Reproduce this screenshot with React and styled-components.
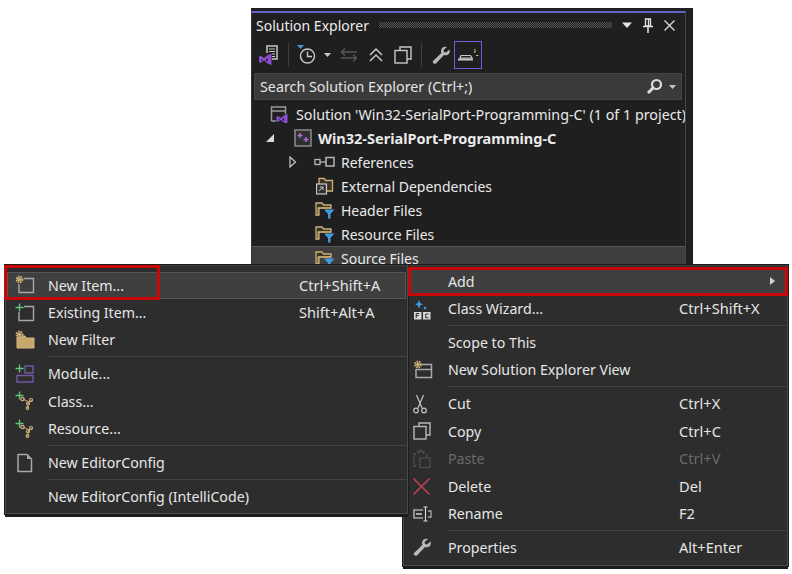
import React from "react";
import styled, { createGlobalStyle } from "styled-components";

const Global = createGlobalStyle`
  html, body { margin: 0; padding: 0; background: #fff; }
  body { font-family: "Noto Sans", "Open Sans", sans-serif; }
`;

const Stage = styled.div`
  position: relative;
  width: 792px;
  height: 574px;
  overflow: hidden;
`;

const Explorer = styled.section`
  position: absolute;
  left: 251px;
  top: 8px;
  width: 442px;
  height: 258px;
  box-sizing: border-box;
  background: #1f1f1f;
  padding: 3px 7px 0 0;
  display: flex;
  flex-direction: column;
  overflow: hidden;
`;

const ExplorerInner = styled.div`
  border-top: 2px solid #6063c8;
  border-right: 1px solid #454545;
  border-left: 1px solid #333;
  flex: 1;
  display: flex;
  flex-direction: column;
  min-height: 0;
  & > * {
    flex: none;
  }
`;

const TitleBar = styled.header`
  height: 26px;
  display: flex;
  align-items: center;
  padding: 0 10px 2px 4px;
  box-sizing: border-box;
  color: #ececec;
  font-size: 14px;
`;

const Grip = styled.div`
  flex: 1;
  height: 6px;
  margin: 0 10px 0 10px;
  background-image:
    linear-gradient(45deg, #565656 25%, transparent 25%, transparent 75%, #565656 75%),
    linear-gradient(45deg, #565656 25%, transparent 25%, transparent 75%, #565656 75%);
  background-size: 2px 2px;
  background-position: 0 0, 1px 1px;
`;

const TitleButtons = styled.div`
  display: flex;
  align-items: center;
`;

const TitleGap = styled.span`
  width: ${(p) => p.$w}px;
`;

const Toolbar = styled.div`
  height: 32px;
  display: flex;
  align-items: center;
  padding-left: 4px;
`;

const ToolButton = styled.div`
  width: ${(p) => p.$w || 30}px;
  height: 28px;
  display: flex;
  align-items: center;
  justify-content: center;
  box-sizing: border-box;
  border: ${(p) => (p.$active ? "1px solid #6a63e0" : "none")};
`;

const ToolSep = styled.div`
  width: 1px;
  height: 24px;
  background: #3f3f3f;
  margin: 0 6px;
`;

const SearchBox = styled.div`
  height: 27px;
  margin: 2px 3px 2px 2px;
  background: #3a3a3a;
  border: 1px solid #444;
  box-sizing: border-box;
  display: flex;
  align-items: center;
  padding: 0 4px 0 5px;
  color: #e4e4e4;
  font-size: 14.3px;
`;

const SearchLabel = styled.span`
  flex: 1;
`;

const SearchGap = styled.span`
  width: 6px;
`;

const Tree = styled.div`
  display: flex;
  flex-direction: column;
`;

const TreeRow = styled.div`
  height: 24px;
  flex: none;
  display: flex;
  align-items: center;
  box-sizing: border-box;
  padding-left: ${(p) => p.$indent}px;
  color: #eaeaea;
  font-size: ${(p) => p.$size || 14}px;
  font-weight: ${(p) => (p.$bold ? 700 : 400)};
  white-space: nowrap;
  background: ${(p) => (p.$selected ? "#3e3e3e" : "transparent")};
  border-top: ${(p) => (p.$selected ? "1px solid #585858" : "none")};
  overflow: hidden;
`;

const Twist = styled.span`
  width: ${(p) => p.$w}px;
  display: flex;
  align-items: center;
  justify-content: flex-start;
  flex: none;
`;

const TreeIcon = styled.span`
  width: ${(p) => p.$w}px;
  display: flex;
  align-items: center;
  flex: none;
`;

const Menu = styled.nav`
  position: absolute;
  left: ${(p) => p.$x}px;
  top: ${(p) => p.$y}px;
  width: ${(p) => p.$width}px;
  z-index: ${(p) => p.$z};
  box-sizing: border-box;
  background: #2d2d2d;
  border: 1px solid #4a4a4a;
  border-top-color: #3a3a3a;
  padding: ${(p) => p.$pad}px 1px ${(p) => p.$padBottom}px 1px;
  box-shadow: 0 0 0 1px #1c1c1c, 0 3px 0 0 #1c1c1c;
`;

const Row = styled.div`
  height: 27.4px;
  box-sizing: border-box;
  display: grid;
  grid-template-columns: ${(p) => p.$cols};
  align-items: center;
  color: ${(p) => (p.$off ? "#6a6a6a" : "#e6e6e6")};
  font-size: 14.2px;
  white-space: nowrap;
  background: ${(p) => (p.$hot ? "#3f3f3f" : "transparent")};
  border: ${(p) => (p.$hot ? "1px solid #555" : "1px solid transparent")};
`;

const Shortcut = styled.span`
  font-size: 14.6px;
  margin-top: -1px;
`;

const IconCell = styled.span`
  display: flex;
  align-items: center;
  justify-content: flex-start;
  padding-left: ${(p) => p.$pad}px;
`;

const Chevron = styled.span`
  justify-self: end;
  margin-right: 10px;
  width: 0;
  height: 0;
  border-left: 5px solid #d0d0d0;
  border-top: 4px solid transparent;
  border-bottom: 4px solid transparent;
`;

const Sep = styled.div`
  height: 6.6px;
  display: flex;
  align-items: center;
  padding-left: ${(p) => p.$left}px;
  &::after {
    content: "";
    flex: 1;
    height: 1px;
    background: #444;
  }
`;

const Callout = styled.div`
  position: absolute;
  left: ${(p) => p.$x}px;
  top: ${(p) => p.$y}px;
  width: ${(p) => p.$w}px;
  height: ${(p) => p.$h}px;
  border: 3px solid #c80808;
  box-sizing: border-box;
  z-index: 5;
`;

const Svg = ({ w = 20, h = 20, children }) => (
  <svg width={w} height={h} viewBox={`0 0 ${w} ${h}`} fill="none">{children}</svg>
);

const G = "#c8c8c8";
const Y = "#cdb078";
const B = "#3f9be0";
const P = "#7657a8";
const VS = "#8a4fd0";

const VsMark = ({ x, y, s = 1 }) => (
  <path transform={`translate(${x} ${y}) scale(${s})`} d="M1 2l3 2 3-2.500 3-1v9l-3-1-3-2.500-3 2-1-1V3zM2 4.500v2L3 5.500zM7 4l-2 1.500L7 7z" fill={VS} fillRule="evenodd" />
);

const SolutionVsIcon = () => (
  <Svg w={20} h={22}>
    <path d="M8 2h10v13H8z" stroke={G} strokeWidth="1.500" />
    <path d="M10 5h6M10 7.500h6M10 10h6M10 12.500h6" stroke={G} />
    <rect x="0" y="9" width="13" height="13" fill="#1f1f1f" />
    <VsMark x={0} y={9} s={1.25} />
  </Svg>
);
const HistoryIcon = () => (
  <Svg w={20} h={22}>
    <path d="M0 1h7L3.500 5z" fill={B} />
    <circle cx="10.500" cy="12" r="7" stroke={G} strokeWidth="1.400" />
    <path d="M10.500 7.500V12.500H15" stroke={G} strokeWidth="1.400" />
  </Svg>
);
const SmallDown = ({ c = G }) => (
  <Svg w={8} h={6}><path d="M0 1h7L3.500 5z" fill={c} /></Svg>
);
const TitleDown = () => (
  <Svg w={10} h={7}><path d="M0 .5h10L5 6z" fill="#e4e4e4" /></Svg>
);
const SyncIcon = () => (
  <Svg w={20} h={16}>
    <path d="M18 5H3M6 1.500L2.500 5 6 8.500M2 11h15M14 7.500l3.500 3.500-3.500 3.500" stroke="#565656" strokeWidth="1.300" />
  </Svg>
);
const CollapseIcon = () => (
  <Svg w={16} h={16}>
    <path d="M2 8l6-6 6 6M2 14l6-6 6 6" stroke={G} strokeWidth="1.500" />
  </Svg>
);
const CopyViewsIcon = ({ c = G }) => (
  <Svg w={18} h={18}>
    <path d="M6 4V1h11v12h-4" stroke={c} strokeWidth="1.400" />
    <rect x="1" y="4.500" width="12" height="12.500" stroke={c} strokeWidth="1.400" />
  </Svg>
);
const WrenchIcon = () => (
  <Svg w={19} h={19}>
    <path d="M17.500 3.500L14 6.500l-2-.5-.5-2L15 1c-2.500-1-6 .2-6 4 0 1 .2 1.500.4 2L1 15c-1 2 1.500 3.500 3 2.500l8-8.500c3 1 7-1 5.500-5.500z" fill="#b8b8b8" />
  </Svg>
);
const PreviewIcon = () => (
  <Svg w={21} h={16}>
    <path d="M3 8.500h9.500l1.500 2.500H2z" stroke={G} strokeWidth="1.200" />
    <path d="M0 12.500h15" stroke={G} strokeWidth="2" />
    <path d="M16 5.500l1.500-1.500M18 8.500h2.500M16.500 2l1 1.500" stroke={Y} strokeWidth="1.200" />
  </Svg>
);
const PinIcon = () => (
  <Svg w={12} h={15}>
    <path d="M3.500 1h5v7h-5zM6.500 1.500V8" stroke="#e4e4e4" strokeWidth="1.300" />
    <path d="M1 8.500h10M6 9v6" stroke="#e4e4e4" strokeWidth="1.500" />
  </Svg>
);
const CloseIcon = ({ c = "#d8d8d8", s = 11, sw = 1.400 }) => (
  <Svg w={s} h={s}><path d={`M.5.5L${s - 0.5} ${s - 0.5}M${s - 0.5} .5L.5 ${s - 0.5}`} stroke={c} strokeWidth={sw} /></Svg>
);
const SearchIcon = () => (
  <Svg w={17} h={17}>
    <circle cx="10.500" cy="6.500" r="4.500" stroke="#dcdcdc" strokeWidth="2.200" />
    <path d="M7 10l-5 5" stroke="#dcdcdc" strokeWidth="3" />
  </Svg>
);
const SolutionIcon = () => (
  <Svg w={19} h={18}>
    <path d="M1.500 16V2h14v7M1.500 6h14M1.500 16H6" stroke="#9a9a9a" strokeWidth="1.500" />
    <VsMark x={6.500} y={8.500} s={1.100} />
  </Svg>
);
const ProjectIcon = () => (
  <Svg w={18} h={18}>
    <rect x="1" y="1" width="16" height="16" fill="#303030" stroke="#8c8c8c" strokeWidth="1.500" />
    <path d="M6 4v5M3.500 6.500h5M12 8v5M9.500 10.500h5" stroke="#b06bd4" strokeWidth="1.500" />
  </Svg>
);
const RefIcon = () => (
  <Svg w={21} h={12}>
    <rect x="1" y="3.500" width="5" height="5" stroke="#b8b8b8" strokeWidth="1.300" />
    <path d="M6 6h6" stroke="#b8b8b8" strokeWidth="1.300" />
    <rect x="12" y="1.500" width="8" height="8.500" stroke="#b8b8b8" strokeWidth="1.500" />
  </Svg>
);
const ExternalIcon = () => (
  <Svg w={18} h={18}>
    <path d="M3 1.500h5.500l1 2h7V14H3z" fill="#3a3226" stroke={Y} strokeWidth="1.300" />
    <rect x=".5" y="7" width="10" height="10" fill="#333" stroke="#c8c8c8" strokeWidth="1.200" />
    <path d="M3 14l4-4M4 10h3v3" stroke="#c8c8c8" />
  </Svg>
);
const FilterFolder = () => (
  <Svg w={20} h={18}>
    <path d="M1 14V2h6l1.500 2H16v3H4v7z" fill="#3a3226" stroke={Y} strokeWidth="1.300" />
    <path d="M3 14V7h13" stroke={Y} strokeWidth="1.100" />
    <path d="M9 8.500h10.500l-4 4.500v4.500h-2.500V13z" fill={B} />
  </Svg>
);
const Gear = ({ x = 4, y = 4 }) => (
  <g>
    <circle cx={x} cy={y} r="2.800" stroke={Y} strokeWidth="2.200" strokeDasharray="1.500 .8" />
    <circle cx={x} cy={y} r="1.800" fill={Y} />
  </g>
);
const Plus = ({ x = 4.500, y = 4.500, c = "#5fc87a" }) => (
  <path d={`M${x} ${y - 4}v8M${x - 4} ${y}h8`} stroke={c} strokeWidth="1.300" />
);
const NewItemIcon = () => (
  <Svg w={20} h={20}>
    <path d="M9 3.500h9.500v14H4V9" stroke="#a8a8a8" strokeWidth="1.400" />
    <Gear x={4.500} y={4.500} />
  </Svg>
);
const ExistingIcon = () => (
  <Svg w={20} h={20}>
    <path d="M9 3.500h9.500v14H4V9" stroke="#a8a8a8" strokeWidth="1.400" />
    <Plus />
  </Svg>
);
const NewFilterIcon = () => (
  <Svg w={20} h={20}>
    <path d="M2 18V7h5l1-1h2l1 2h8v10z" fill="#c4a76a" stroke="#d8bd80" />
    <Gear x={4.500} y={4.500} />
  </Svg>
);
const ModuleIcon = () => (
  <Svg w={20} h={20}>
    <Plus />
    <rect x="10" y="2" width="8" height="7" stroke={P} strokeWidth="1.400" />
    <rect x="2" y="11.500" width="16" height="6.500" stroke={P} strokeWidth="1.400" />
  </Svg>
);
const ClassIcon = () => (
  <Svg w={20} h={20}>
    <Plus />
    <path d="M8 8l6 3-2 6M14 11l4-2" stroke={Y} strokeWidth="1" />
    <circle cx="7.500" cy="8" r="1.700" stroke={Y} strokeWidth="1.200" />
    <circle cx="16" cy="9" r="1.500" stroke={Y} strokeWidth="1.200" />
    <circle cx="13" cy="12.500" r="1.500" stroke={Y} strokeWidth="1.200" />
    <circle cx="12.500" cy="17" r="1.300" stroke={Y} strokeWidth="1.200" />
  </Svg>
);
const FileIcon = () => (
  <Svg w={20} h={20}>
    <path d="M3 1.500h9l4.500 4.500v12.500H3z" fill="#2d2d2d" stroke="#a8a8a8" strokeWidth="1.500" />
    <path d="M12 1.500V6h4.500z" fill="#a8a8a8" />
  </Svg>
);
const WizardIcon = () => (
  <Svg w={20} h={22}>
    <path d="M6 2l1.200 3L10 6.200 7.200 7.500 6 10.500 4.800 7.500 2 6.200 4.800 5z" fill={B} />
    <circle cx="12" cy="10" r="1.300" fill={B} />
    <rect x="1" y="14" width="7.500" height="7.500" fill="#d8d8d8" />
    <rect x="10" y="14" width="7.500" height="7.500" fill="#d8d8d8" />
    <path d="M3.200 20v-4.500h3M3.200 17.500h2.500" stroke="#2d2d2d" />
    <path d="M15.500 16h-2.800v3.800h2.800" stroke="#2d2d2d" />
  </Svg>
);
const NewViewIcon = () => (
  <Svg w={20} h={20}>
    <path d="M9 4.500h9.500v13H3V9M3 9.500h15.500" stroke="#a8a8a8" strokeWidth="1.500" />
    <Gear x={5} y={4.500} />
  </Svg>
);
const CutIcon = () => (
  <Svg w={14} h={20}>
    <path d="M3.500 1l5.500 13M10.500 1L5 14" stroke="#c4c4c4" strokeWidth="1.200" />
    <circle cx="3" cy="16.500" r="2.300" stroke="#c4c4c4" strokeWidth="1.200" />
    <circle cx="11" cy="16.500" r="2.300" stroke="#c4c4c4" strokeWidth="1.200" />
  </Svg>
);
const PasteIcon = () => (
  <Svg w={18} h={20}>
    <path d="M5 5V3h1l1-2h1l1 2h2v2M3 17H1V5h2M14 8V5" stroke="#4e4e4e" strokeWidth="1.300" />
    <rect x="7" y="9" width="10" height="9.500" stroke="#4e4e4e" strokeWidth="1.300" />
  </Svg>
);
const RenameIcon = () => (
  <Svg w={20} h={20}>
    <path d="M10 6H1v8h9" stroke="#a8a8a8" strokeWidth="1.600" />
    <path d="M3 10h6" stroke="#a8a8a8" strokeWidth="2" />
    <path d="M10.500 3h4M10.500 17h4M12.500 3v14" stroke="#e0e0e0" strokeWidth="1.100" />
    <path d="M15 7h3v6h-3" stroke="#a8a8a8" strokeWidth="1.300" />
  </Svg>
);

const treeRows = [
  { indent: 18, iw: 26, icon: <SolutionIcon />, label: "Solution 'Win32-SerialPort-Programming-C' (1 of 1 project)", size: 14.3 },
  { indent: 13, twist: <Svg w={10} h={10}><path d="M9 1v8H1z" fill="#d8d8d8" /></Svg>, tw: 29, icon: <ProjectIcon />, iw: 24, label: "Win32-SerialPort-Programming-C", bold: true, size: 14.5 },
  { indent: 37, twist: <Svg w={8} h={12}><path d="M1 1l5.500 5L1 11z" stroke="#c8c8c8" strokeWidth="1.200" /></Svg>, tw: 25, icon: <RefIcon />, iw: 27, label: "References" },
  { indent: 64, icon: <ExternalIcon />, iw: 25, label: "External Dependencies" },
  { indent: 63, icon: <FilterFolder />, iw: 26, label: "Header Files" },
  { indent: 63, icon: <FilterFolder />, iw: 26, label: "Resource Files" },
  { indent: 63, icon: <FilterFolder />, iw: 26, label: "Source Files", selected: true },
];

const leftCols = "40px 251px 1fr";
const rightCols = "42px 231px 1fr";

const leftItems = [
  { icon: <NewItemIcon />, label: "New Item...", key: "Ctrl+Shift+A", hot: true },
  { icon: <ExistingIcon />, label: "Existing Item...", key: "Shift+Alt+A" },
  { icon: <NewFilterIcon />, label: "New Filter" },
  { sep: true },
  { icon: <ModuleIcon />, label: "Module..." },
  { icon: <ClassIcon />, label: "Class..." },
  { icon: <ClassIcon />, label: "Resource..." },
  { sep: true },
  { icon: <FileIcon />, label: "New EditorConfig" },
  { sep: true },
  { label: "New EditorConfig (IntelliCode)" },
];

const rightItems = [
  { label: "Add", hot: true, sub: true },
  { icon: <WizardIcon />, label: "Class Wizard...", key: "Ctrl+Shift+X" },
  { sep: true },
  { label: "Scope to This" },
  { icon: <NewViewIcon />, label: "New Solution Explorer View" },
  { sep: true },
  { icon: <CutIcon />, label: "Cut", key: "Ctrl+X" },
  { icon: <CopyViewsIcon c="#b8b8b8" />, label: "Copy", key: "Ctrl+C" },
  { icon: <PasteIcon />, label: "Paste", key: "Ctrl+V", off: true },
  { icon: <CloseIcon c="#c24050" s={17} sw={1.500} />, label: "Delete", key: "Del" },
  { icon: <RenameIcon />, label: "Rename", key: "F2" },
  { sep: true },
  { icon: <WrenchIcon />, label: "Properties", key: "Alt+Enter" },
];

const MenuList = ({ items, cols, sepLeft, iconPad }) =>
  items.map((it, i) =>
    it.sep ? (
      <Sep key={i} $left={sepLeft} />
    ) : (
      <Row key={i} $cols={cols} $hot={it.hot} $off={it.off}>
        <IconCell $pad={iconPad}>{it.icon}</IconCell>
        <span>{it.label}</span>
        {it.sub ? <Chevron /> : <Shortcut>{it.key}</Shortcut>}
      </Row>
    )
  );

export default function App() {
  return (
    <Stage>
      <Global />
      <Explorer>
        <ExplorerInner>
          <TitleBar>
            <span>Solution Explorer</span>
            <Grip />
            <TitleButtons>
              <TitleDown />
              <TitleGap $w={10} />
              <PinIcon />
              <TitleGap $w={10} />
              <CloseIcon />
            </TitleButtons>
          </TitleBar>
          <Toolbar>
            <ToolButton $w={26}><SolutionVsIcon /></ToolButton>
            <ToolSep />
            <ToolButton $w={24}><HistoryIcon /></ToolButton>
            <ToolButton $w={18}><SmallDown /></ToolButton>
            <ToolButton $w={24}><SyncIcon /></ToolButton>
            <ToolButton $w={30}><CollapseIcon /></ToolButton>
            <ToolButton $w={24}><CopyViewsIcon /></ToolButton>
            <ToolSep />
            <ToolButton $w={26}><WrenchIcon /></ToolButton>
            <ToolButton $w={28} $active><PreviewIcon /></ToolButton>
          </Toolbar>
          <SearchBox>
            <SearchLabel>Search Solution Explorer (Ctrl+;)</SearchLabel>
            <SearchIcon />
            <SearchGap />
            <SmallDown />
          </SearchBox>
          <Tree>
            {treeRows.map((r) => (
              <TreeRow key={r.label} $indent={r.indent} $bold={r.bold} $selected={r.selected} $size={r.size}>
                {r.twist && <Twist $w={r.tw}>{r.twist}</Twist>}
                <TreeIcon $w={r.iw}>{r.icon}</TreeIcon>
                <span>{r.label}</span>
              </TreeRow>
            ))}
          </Tree>
        </ExplorerInner>
      </Explorer>

      <Menu $x={403} $y={265} $width={385} $z={1} $pad={1.5} $padBottom={4}>
        <MenuList items={rightItems} cols={rightCols} sepLeft={42} iconPad={7} />
      </Menu>
      <Menu $x={5} $y={265} $width={403} $z={2} $pad={5.5} $padBottom={3}>
        <MenuList items={leftItems} cols={leftCols} sepLeft={40} iconPad={7} />
      </Menu>

      <Callout $x={4} $y={265} $w={156} $h={35} />
      <Callout $x={408} $y={267} $w={380} $h={29} />
    </Stage>
  );
}
